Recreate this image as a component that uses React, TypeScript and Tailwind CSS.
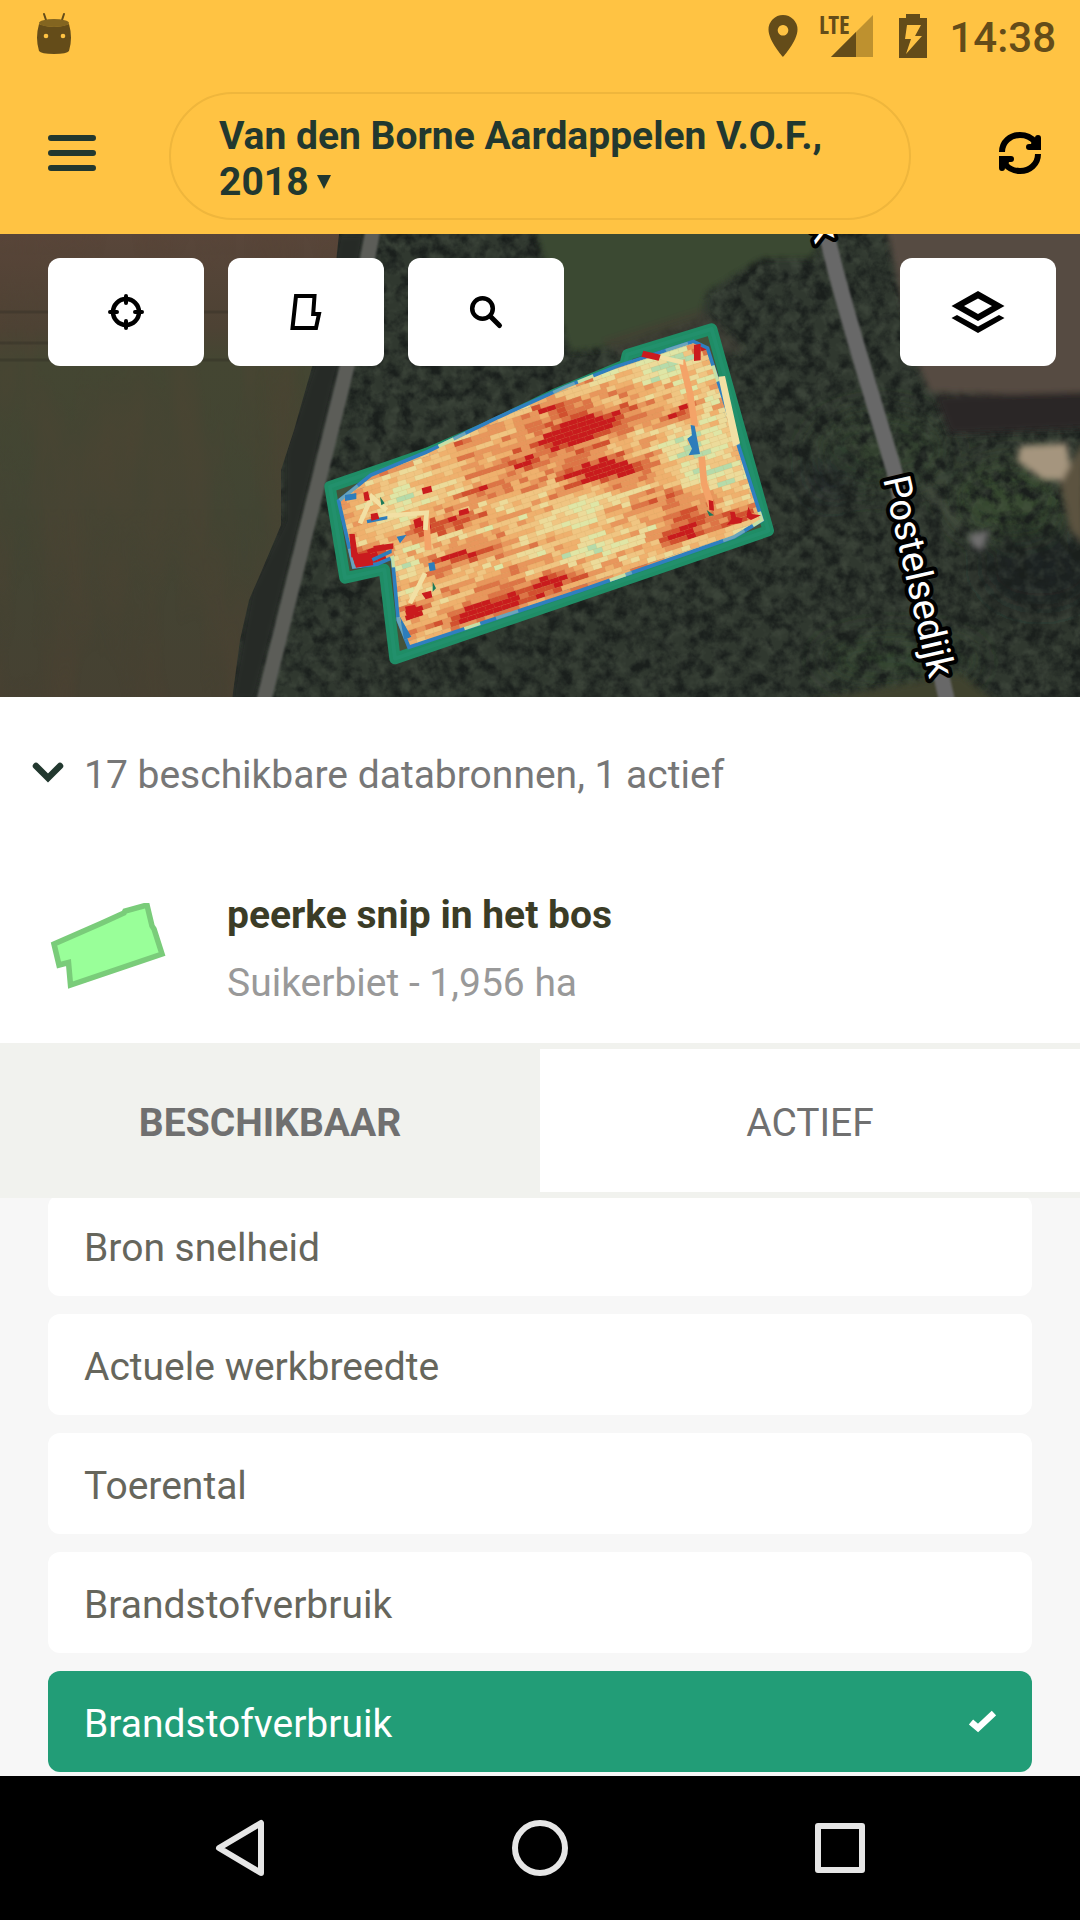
import { useState } from 'react'

const sources = [
    { id: 1, name: 'Bron snelheid' },
    { id: 2, name: 'Actuele werkbreedte' },
    { id: 3, name: 'Toerental' },
    { id: 4, name: 'Brandstofverbruik' },
    { id: 5, name: 'Brandstofverbruik' },
]

const palette = ['#b5dbaa', '#dfe6a6', '#ecdb9a', '#f0c582', '#efb06d', '#e8965c', '#dd7446', '#d2502f', '#c91b1d']

// x, y, radius along the row, radius across, weight
const spots = [
    [573, 424, 25, 15, 6],
    [550, 438, 20, 7, 4],
    [612, 470, 36, 9, 5],
    [578, 470, 28, 11, 3],
    [493, 605, 34, 11, 7],
    [548, 580, 32, 8, 6],
    [455, 618, 20, 11, 3],
    [680, 411, 14, 8, 6],
    [614, 415, 42, 16, 2.8],
    [545, 405, 18, 12, 3],
    [640, 505, 36, 12, 2.6],
    [677, 533, 42, 8, 3],
    [690, 515, 26, 12, 2],
    [468, 553, 36, 9, 3.5],
    [480, 493, 40, 9, 2.3],
    [440, 523, 30, 9, 2],
    [517, 462, 46, 10, 2.2],
    [560, 450, 70, 30, 1],
    [430, 580, 40, 30, 1],
    [457, 450, 22, 9, 2],
    [363, 559, 18, 9, 7],
    [418, 523, 10, 9, 4],
    [409, 612, 9, 9, 5],
    [736, 516, 18, 7, 5],
    [698, 348, 9, 9, 5],
    [663, 365, 50, 24, -2.2],
    [683, 453, 28, 32, -3],
    [575, 515, 50, 22, -1.9],
    [400, 500, 46, 24, -2.2],
    [409, 570, 18, 32, -2],
    [723, 470, 20, 70, -2],
    [600, 545, 50, 12, -1.8],
]

function makeRandom(seed: number) {
    let s = seed
    return () => {
        s = (s * 16807) % 2147483647
        return s / 2147483647
    }
}

function makeCells() {
    const random = makeRandom(4711)
    const angle = (-18 * Math.PI) / 180
    const cos = Math.cos(angle)
    const sin = Math.sin(angle)
    const cells: { x: number; y: number; fill: string }[] = []
    for (let row = -38; row < 38; row++) {
        const shift = random() * 9
        let streak = 0
        let left = 0
        for (let col = -28; col < 28; col++) {
            if (left <= 0) {
                streak = (random() - 0.5) * 3.2
                left = 1 + Math.floor(random() * 5)
            }
            left--
            const x = col * 9 + shift
            const y = row * 5
            const px = 540 + x * cos - y * sin
            const py = 488 + x * sin + y * cos
            let value = 3.8 + streak + (random() - 0.5) * 2
            for (const [sx, sy, rx, ry, weight] of spots) {
                const dx = (px - sx) * cos + (py - sy) * sin
                const dy = -(px - sx) * sin + (py - sy) * cos
                value += weight * Math.exp(-((dx / rx) ** 2) - (dy / ry) ** 2)
            }
            const index = Math.max(0, Math.min(palette.length - 1, Math.round(value)))
            cells.push({ x, y, fill: palette[index] })
        }
    }
    return cells
}

const cells = makeCells()

const fieldOutline = '90,530 235,480 380,430 560,352 760,255 975,165 982,134 1235,57 1405,662 285,1046 253,778 135,804'
const cropOutline = '122,575 215,500 380,432 590,330 800,235 950,175 1180,100 1218,118 1380,628 1300,676 840,836 330,1005 300,930 282,735 230,757 165,765'

function FieldMap() {
    return (
        <svg className="absolute inset-0 h-full w-full" viewBox="0 234 1080 463" preserveAspectRatio="xMidYMid slice" role="img" aria-label="Perceelkaart">
            <defs>
                <filter id="trees" x="0" y="0" width="100%" height="100%" colorInterpolationFilters="sRGB">
                    <feTurbulence type="fractalNoise" baseFrequency="0.07" numOctaves="4" seed="8" />
                    <feColorMatrix values="0 0 0 0 0.1  0 0 0 0 0.12  0 0 0 0 0.11  2.4 1.4 0 0 -1.55" />
                </filter>
                <filter id="treeTops" x="0" y="0" width="100%" height="100%" colorInterpolationFilters="sRGB">
                    <feTurbulence type="fractalNoise" baseFrequency="0.08" numOctaves="3" seed="21" />
                    <feColorMatrix values="0 0 0 0 0.34  0 0 0 0 0.38  0 0 0 0 0.32  2.8 0 0 0 -1.2" />
                </filter>
                <filter id="soil" x="0" y="0" width="100%" height="100%" colorInterpolationFilters="sRGB">
                    <feTurbulence type="fractalNoise" baseFrequency="0.02 0.005" numOctaves="3" seed="5" />
                    <feColorMatrix values="0 0 0 0 0.34  0 0 0 0 0.26  0 0 0 0 0.2  2 0 0 0 -0.7" />
                </filter>
                <filter id="soft"><feGaussianBlur stdDeviation="3" /></filter>
                <filter id="line"><feGaussianBlur stdDeviation="1" /></filter>
                <filter id="softer"><feGaussianBlur stdDeviation="14" /></filter>
                <linearGradient id="leftSoil" x1="0" y1="0" x2="0" y2="1">
                    <stop offset="0" stopColor="#59463a" />
                    <stop offset="0.2" stopColor="#4d4234" />
                    <stop offset="0.27" stopColor="#444632" />
                    <stop offset="0.6" stopColor="#424533" />
                    <stop offset="1" stopColor="#464132" />
                </linearGradient>
                <clipPath id="leftClip"><polygon points="0,234 339,234 333,290 312,367 294,430 281,470 281,525 262,570 249,600 240,640 232,700 0,700" /></clipPath>
                <clipPath id="cropClip"><polygon points={cropOutline} transform="translate(300 310) scale(0.33333)" /></clipPath>
            </defs>

            <rect x="0" y="234" width="1080" height="463" fill="#30382f" />
            <g filter="url(#softer)">
                <ellipse cx="880" cy="450" rx="70" ry="40" fill="#31412d" />
                <ellipse cx="1010" cy="500" rx="60" ry="40" fill="#36462f" />
                <ellipse cx="900" cy="660" rx="80" ry="25" fill="#31432d" />
                <ellipse cx="1040" cy="570" rx="60" ry="40" fill="#1d2224" />
                <ellipse cx="830" cy="480" rx="22" ry="22" fill="#20262b" />
            </g>
            <rect x="0" y="234" width="1080" height="463" filter="url(#trees)" />
            <rect x="0" y="234" width="1080" height="463" filter="url(#treeTops)" opacity="0.3" />

            <g filter="url(#soft)">
                <polygon points="338,234 366,234 340,367 300,530 256,700 230,700 250,590 284,520 284,450 312,367" fill="#262927" />
                <polygon points="535,225 825,225 812,258 762,258 706,292 700,318 620,345 570,352 555,300" fill="#3a4931" />
                <polygon points="600,340 700,308 745,350 640,370" fill="#423f35" opacity="0.6" />
                <polygon points="886,225 1090,225 1090,396 930,392 912,350" fill="#574b42" />
                <polygon points="935,396 1090,392 1090,428 950,434" fill="#2b2727" />
                <polygon points="1020,446 1067,443 1074,492 1058,480 1043,480 1017,461" fill="#a5957e" />
                <polygon points="1060,484 1084,440 1084,545 1070,530" fill="#5b5340" />
                <path d="M925 485 L962 530" stroke="#50584a" strokeWidth="4" />
                <path d="M968 534 l22 -4 l-8 22 l-10 -6z" fill="#716f70" />
                <polygon points="790,705 960,674 1000,705" fill="#41432f" />
            </g>

            <g clipPath="url(#leftClip)">
                <rect x="0" y="234" width="345" height="466" fill="url(#leftSoil)" />
                <rect x="0" y="234" width="345" height="466" filter="url(#soil)" opacity="0.35" />
                <path d="M0 343 H200 M0 312 H330 M0 360 H320" stroke="#2f2c23" strokeWidth="3" opacity="0.35" />
            </g>

            <path d="M373 230 L347 367 L264 700" fill="none" stroke="#5c5d58" strokeWidth="15" filter="url(#line)" />
            <path d="M826 230 C832 262 845 305 858 350 L894 470 L948 705" fill="none" stroke="#676767" strokeWidth="16" filter="url(#line)" />

            {/* perceel */}
            <g transform="translate(300 310) scale(0.33333)">
                <polygon points={fieldOutline} fill="#44523a" stroke="#1f8d66" strokeWidth="34" strokeLinejoin="round" />
                <polygon points={fieldOutline} fill="none" stroke="#26937180" strokeWidth="12" strokeLinejoin="round" />
                <polygon points={cropOutline} fill="#f2b873" stroke="#2f7fc0" strokeWidth="22" />
                <polygon points={cropOutline} fill="none" stroke="#6aa5bb" strokeWidth="20" strokeDasharray="70 290" />
                <polygon points={cropOutline} fill="none" stroke="#c5e0a6" strokeWidth="20" strokeDasharray="50 410" strokeDashoffset="120" />
            </g>
            <g clipPath="url(#cropClip)">
                <g transform="translate(540 488) rotate(-18)">
                    {cells.map((cell, i) => (
                        <rect key={i} x={cell.x} y={cell.y} width="9.4" height="5.2" fill={cell.fill} stroke="#c9a060" strokeOpacity="0.25" strokeWidth="0.4" />
                    ))}
                </g>
            </g>
            <g transform="translate(300 310) scale(0.33333)">
                <path d="M1145 150 L1170 250 L1185 350 M1205 440 L1212 520 L1235 590 M378 620 L385 720" fill="none" stroke="#f4a368" strokeWidth="20" />
                <path d="M1255 200 L1275 198 L1320 400 L1300 410z M1080 135 L1150 150 L1150 165 L1080 148z" fill="#f2e0a4" />
                <path d="M250 618 L380 608 L376 660 M375 790 L330 880 M180 640 L215 560 L260 600" fill="none" stroke="#f2e0a4" strokeWidth="14" />
                <path d="M1172 345 l12 2 l16 85 l-34 4 l10 -20 l-14 -30 l14 -10z M135 555 l34 -6 v18 l-34 6z M290 680 l30 -6 l-20 26z M385 760 l18 -4 l4 24 l-18 4z M300 920 l34 60 l-22 10z M200 630 l62 -12 v10 l-60 12z M215 745 l60 -28 v12 l-56 26z" fill="#2d7dbb" />
                <path d="M1030 122 L1082 134 L1076 152 L1024 140z M1182 105 l20 -4 l0 50 l-20 2z M155 735 l55 -8 l10 38 l-52 8z M148 672 l16 0 l10 70 l-20 0z M340 630 l22 -8 l6 24 l-22 10z M190 548 l14 -4 l6 26 l-16 4z M212 612 l20 -4 l6 18 l-24 6z M365 535 l28 -8 l4 18 l-28 8z M476 602 l28 -8 l4 16 l-30 8z M1290 605 l14 0 l4 16 l20 4 l-4 14 l-44 6 l14 -18z M1345 590 l10 22 l28 4 l-30 14 l-14 -8z M1226 570 l14 4 l2 28 l-14 -2z M365 850 l28 -8 l4 20 l-20 6z M315 890 l30 -6 l10 24 l-32 14z M220 708 l60 -8 v16 l-56 10z" fill="#ca1b1e" />
                <path d="M240 560 l14 20 l-10 6z M398 815 l10 20 l-10 10z M1220 600 l22 16 l-14 2z" fill="#1d7a5a" />
            </g>

            {/* straatnamen */}
            <g className="font-['Roboto',sans-serif] text-[38px]" fill="#fff" stroke="#000" strokeWidth="8" strokeLinejoin="round" paintOrder="stroke">
                <text transform="translate(883 479) rotate(77)">Postelsedijk</text>
                <text transform="translate(810 226) rotate(74)">k</text>
            </g>
        </svg>
    )
}

function StatusBar() {
    return (
        <div className="flex h-[72px] items-center justify-between pl-9 pr-6 text-[#644c19]">
            <svg width="36" height="48" viewBox="0 0 36 48" aria-hidden="true">
                <path d="M8 2 l3 9 M28 2 l-3 9" stroke="currentColor" strokeWidth="2" strokeLinecap="round" />
                <path d="M3 12 Q18 18 33 12 Q37 26 33 39 Q31 42 18 42 Q5 42 3 39 Q-1 26 3 12z" fill="currentColor" />
                <ellipse cx="18" cy="11" rx="15" ry="4" fill="#836520" />
                <circle cx="10" cy="24" r="2.3" fill="#ffc343" />
                <circle cx="27" cy="24" r="2.3" fill="#ffc343" />
            </svg>
            <div className="flex items-center">
                <svg width="30" height="44" viewBox="0 0 30 44" aria-hidden="true">
                    <path fillRule="evenodd" d="M15 1 A14.5 14.5 0 0 1 29.500 15.500 C29.500 27 15 43 15 43 S0.500 27 0.500 15.500 A14.500 14.500 0 0 1 15 1z M15 11 a5.300 5.300 0 1 0 0.010 0z" fill="currentColor" />
                </svg>
                <svg className="ml-4 overflow-visible" width="60" height="44" viewBox="0 0 60 44" aria-label="LTE">
                    <path d="M59 1 V43 H17z" fill="#be912f" />
                    <path d="M42 18 V43 H17z" fill="currentColor" />
                    <text x="5" y="20" fill="currentColor" className="font-['Open_Sans_Condensed','Roboto_Condensed','Roboto',sans-serif] text-[25px] font-bold">LTE</text>
                </svg>
                <svg className="ml-6" width="30" height="46" viewBox="0 0 30 46" aria-hidden="true">
                    <path fillRule="evenodd" d="M8 1 H22 V5 H29 V45 H1 V5 H8z M9 12 L7 26 H13 L8 41 L24 23 H17 L23 12z" fill="currentColor" />
                </svg>
                <time className="ml-[21px] pt-1 text-[42px] font-medium">14:38</time>
            </div>
        </div>
    )
}

const mapButton = 'flex h-[108px] w-[156px] items-center justify-center rounded-xl bg-white'

export default function App() {
    const [tab, setTab] = useState('available')
    const [selected, setSelected] = useState(5)
    const [open, setOpen] = useState(true)

    return (
        <div className="flex h-screen flex-col bg-white font-['Roboto',sans-serif] text-[39px] leading-[46px]">
            <header className="bg-[#ffc343]">
                <StatusBar />
                <div className="flex h-[162px] items-center">
                    <button type="button" aria-label="Menu" className="w-[169px] pl-12">
                        <svg width="48" height="36" viewBox="0 0 48 36">
                            <path d="M3 3 H45 M3 18 H45 M3 33 H45" stroke="#22382f" strokeWidth="6" strokeLinecap="round" />
                        </svg>
                    </button>
                    <button type="button" className="mt-1.5 min-w-0 flex-1 rounded-full border-2 border-[#efb63c] px-12 pb-[13px] pt-[19px] text-left font-bold text-[#22382f]">
                        Van den Borne Aardappelen V.O.F., 2018
                        <svg className="ml-2 inline-block align-baseline" width="14" height="24" viewBox="0 0 14 24" aria-hidden="true">
                            <path d="M0 4 H14 L7 18z" fill="currentColor" />
                        </svg>
                    </button>
                    <button type="button" aria-label="Vernieuwen" className="flex w-[169px] justify-end pr-[38px]">
                        <svg width="44" height="44" viewBox="0 0 44 44" fill="none" stroke="#000">
                            <path d="M4 21 C4 11 12 4 22 4 C28 4 33 6 37 11" strokeWidth="6" />
                            <path d="M40 23 C40 33 32 40 22 40 C16 40 11 38 7 33" strokeWidth="6" />
                            <path d="M40 7 V16 H31" strokeWidth="6" strokeLinecap="round" />
                            <path d="M34 10 L43 7 V19 H31z" fill="#000" stroke="none" />
                            <path d="M4 37 V28 H13" strokeWidth="6" strokeLinecap="round" />
                            <path d="M10 34 L1 37 V25 H13z" fill="#000" stroke="none" />
                        </svg>
                    </button>
                </div>
            </header>

            <section className="relative flex h-[463px] items-start justify-between overflow-hidden pl-12 pr-6 pt-6">
                <FieldMap />
                <div className="relative flex gap-6">
                    <button type="button" aria-label="Mijn locatie" className={mapButton}>
                        <svg width="36" height="36" viewBox="0 0 36 36" fill="none" stroke="#000">
                            <circle cx="18" cy="18" r="13" strokeWidth="4.500" />
                            <path d="M18 2 V9 M18 27 V34 M2 18 H9 M27 18 H34" strokeWidth="4" strokeLinecap="round" />
                        </svg>
                    </button>
                    <button type="button" aria-label="Perceel" className={mapButton}>
                        <svg width="36" height="36" viewBox="0 0 36 36" fill="none" stroke="#000" strokeWidth="4">
                            <path d="M8 2 H26.500 L25.200 20 H31 L28 34 H4.500z" />
                        </svg>
                    </button>
                    <button type="button" aria-label="Zoeken" className={mapButton}>
                        <svg width="36" height="36" viewBox="0 0 36 36" fill="none" stroke="#000">
                            <circle cx="14.500" cy="14.500" r="10.300" strokeWidth="4.500" />
                            <path d="M22.500 22.500 L31.500 31.500" strokeWidth="5" strokeLinecap="round" />
                        </svg>
                    </button>
                </div>
                <div className="relative">
                    <button type="button" aria-label="Kaartlagen" className={mapButton}>
                        <svg width="54" height="44" viewBox="0 0 54 44">
                            <path fillRule="evenodd" d="M27 1 L53.500 16 L27 31 L0.500 16z M27 8.500 L13 16 L27 24 L41 16z" />
                            <path d="M0.500 28 L6 25 L27 36.500 L48 25 L53.500 28 L27 43z" />
                        </svg>
                    </button>
                </div>
            </section>

            <button type="button" aria-expanded={open} onClick={() => setOpen(!open)} className="flex h-[156px] items-center gap-5 px-8 text-left text-[#777]">
                <svg width="32" height="26" viewBox="0 0 32 26" fill="none" aria-hidden="true">
                    <path d="M4 4 L16 16 L28 4" stroke="#22382f" strokeWidth="6.500" strokeLinecap="round" />
                </svg>
                <span>17 beschikbare databronnen, 1 actief</span>
            </button>

            <div className="flex items-center gap-[59px] px-12 pb-[37px] pt-[39px]">
                <svg width="120" height="92" viewBox="0 0 120 92" aria-hidden="true">
                    <path d="M6 41 L54 20 L76 10 L77 8 L99 2 L104 23 L106 26 L114 51 L22.500 82 L20.500 59.500 L11 62z" fill="#9f9" stroke="#7acc7a" strokeWidth="5.500" />
                </svg>
                <div className="flex flex-col gap-[22px]">
                    <h1 className="font-bold text-[#3b3c26]">peerke snip in het bos</h1>
                    <p className="text-[#999]">Suikerbiet - 1,956 ha</p>
                </div>
            </div>

            <div role="tablist" className="grid grid-cols-2 border-y-6 border-[#f1f2ee] text-[#707070]">
                <button
                    type="button"
                    role="tab"
                    aria-selected={tab === 'available'}
                    onClick={() => setTab('available')}
                    className={tab === 'available' ? 'bg-[#f1f2ee] pb-[46px] pt-[51px] font-bold' : 'bg-white pb-[46px] pt-[51px]'}
                >
                    BESCHIKBAAR
                </button>
                <button
                    type="button"
                    role="tab"
                    aria-selected={tab === 'active'}
                    onClick={() => setTab('active')}
                    className={tab === 'active' ? 'bg-[#f1f2ee] pb-[46px] pt-[51px] font-bold' : 'bg-white pb-[46px] pt-[51px]'}
                >
                    ACTIEF
                </button>
            </div>

            <ul className="flex min-h-0 flex-1 flex-col justify-end gap-[18px] overflow-hidden bg-[#f7f7f7] px-12 pb-1">
                {sources.map((source) => (
                    <li key={source.id}>
                        <button
                            type="button"
                            aria-pressed={source.id === selected}
                            onClick={() => setSelected(source.id)}
                            className={
                                source.id === selected
                                    ? 'flex w-full items-center justify-between rounded-xl bg-[#229d77] px-9 pb-[25px] pt-[30px] text-left text-white'
                                    : 'flex w-full items-center justify-between rounded-xl bg-white px-9 pb-[25px] pt-[30px] text-left text-[#66665c]'
                            }
                        >
                            {source.name}
                            {source.id === selected && (
                                <svg width="28" height="28" viewBox="0 0 28 28" fill="none" aria-hidden="true">
                                    <path d="M3 12 L10 18 L26 3" stroke="#fff" strokeWidth="6.500" />
                                </svg>
                            )}
                        </button>
                    </li>
                ))}
            </ul>

            <nav className="grid h-36 grid-cols-3 items-center justify-items-center bg-black px-[90px]">
                <button type="button" aria-label="Terug">
                    <svg width="56" height="60" viewBox="0 0 56 60" fill="none">
                        <path d="M49 5 V55 L7 30z" stroke="#e6e6e6" strokeWidth="6" strokeLinejoin="round" />
                    </svg>
                </button>
                <button type="button" aria-label="Start">
                    <svg width="60" height="60" viewBox="0 0 60 60" fill="none">
                        <circle cx="30" cy="30" r="25" stroke="#e6e6e6" strokeWidth="6" />
                    </svg>
                </button>
                <button type="button" aria-label="Overzicht">
                    <svg width="60" height="60" viewBox="0 0 60 60" fill="none">
                        <rect x="8" y="8" width="44" height="44" stroke="#e6e6e6" strokeWidth="6" strokeLinejoin="round" />
                    </svg>
                </button>
            </nav>
        </div>
    )
}
